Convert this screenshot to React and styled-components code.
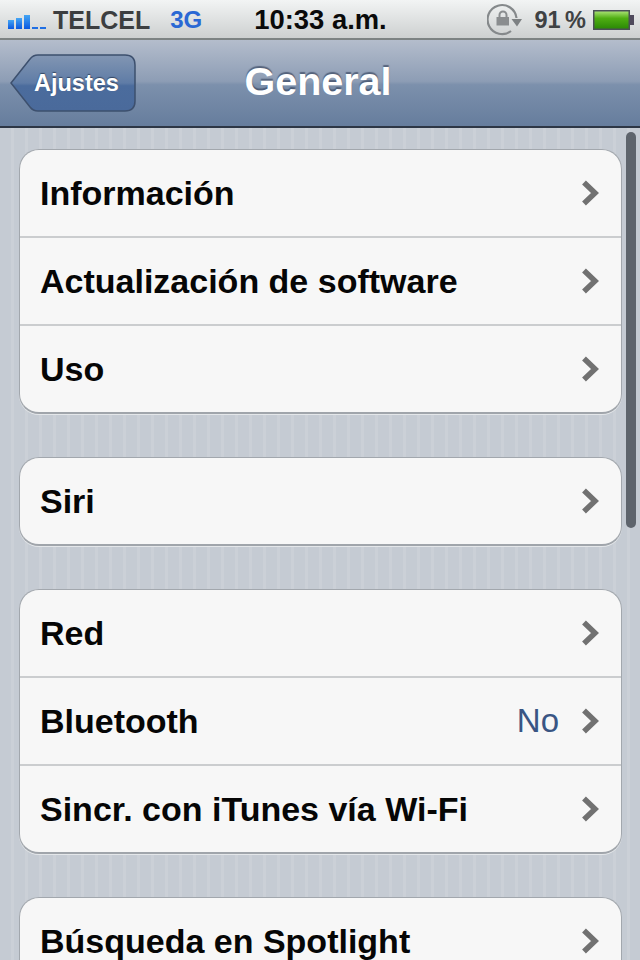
import React from "react";
import styled, {createGlobalStyle} from "styled-components";

const GlobalStyle = createGlobalStyle`
  html, body {margin:0; padding:0; background:#c5cbd3;}
  body {font-family:"Liberation Sans", Arial, sans-serif; width:640px; height:960px; overflow:hidden;}
`;

const Screen = styled.div`position:relative; width:640px; height:960px; overflow:hidden; display:flex; flex-direction:column;`;

const StatusBar = styled.div`
  height:40px; flex:none; display:flex; align-items:center; padding:2px 0 0 8px; box-sizing:border-box;
  background:linear-gradient(#f2f4f4, #cdd0d0); border-bottom:2px solid #7d8383;
  font-size:25px; font-weight:700;
`;
const Carrier = styled.span`color:#3c3e40; margin-left:7px;`;
const Network = styled.span`color:#2a68d4; margin-left:20px; font-size:24px;`;
const Clock = styled.span`color:#0a0a0a; margin-left:52px; font-size:27.4px;`;
const RightStatus = styled.div`margin-left:auto; display:flex; align-items:center; padding-right:6px;`;
const Percent = styled.span`color:#3f4244; margin-left:11px; margin-right:7px; font-size:23.5px; word-spacing:-2px;`;

const NavBar = styled.div`
  height:88px; flex:none; display:flex; align-items:center; position:relative; padding-left:10px; box-sizing:border-box;
  background:linear-gradient(#b4bdcc 0%, #8d9db5 48%, #7c90ac 52%, #667d9d 100%);
  border-bottom:2px solid #2d3645;
`;
const BackButton = styled.div`
  position:relative; width:126px; height:58px; display:flex; align-items:center; padding-left:24px; box-sizing:border-box;
  color:#fff; font-size:23.5px; font-weight:700; text-shadow:0 -1px 1px rgba(30,45,70,.7);
`;
const BackShape = styled.svg`position:absolute; left:0; top:0;`;
const BackLabel = styled.span`position:relative;`;
const Title = styled.div`
  position:absolute; left:0; right:4px; top:18px; text-align:center; color:#fff;
  font-size:39.5px; font-weight:700; line-height:46px; text-shadow:0 -2px 1px rgba(50,65,90,.65);
`;

const Content = styled.div`
  flex:1; padding:21px 18px 0 19px; display:flex; flex-direction:column; gap:43px;
  background:repeating-linear-gradient(90deg, #c5cbd3 0, #c5cbd3 11px, #cbd0d7 11px, #cbd0d7 14px);
`;
const Group = styled.div`
  flex:none; background:#f7f7f7; border-radius:20px; border:1px solid #a2a7ad;
  border-bottom:2px solid #a0a5ab; box-shadow:0 1px 0 #e4e7ea;
`;
const Row = styled.div`
  height:${p => (p.$first ? "86px" : "88px")}; box-sizing:border-box; display:flex; align-items:center; padding:0 22px 0 20px;
  border-top:${p => (p.$first ? "none" : "2px solid #cbcdcf")};
  font-size:34px; font-weight:700; color:#060606;
`;
const RowLabel = styled.span`flex:1;`;
const RowValue = styled.span`font-size:33px; font-weight:400; color:#395583; margin-right:22px;`;
const Chevron = styled.svg`flex:none; display:block;`;

const ScrollThumb = styled.div`
  position:absolute; right:4px; top:132px; width:10px; height:396px; border-radius:5px; background:#5e646c;
`;

const Arrow = () => (
  <Chevron width="18" height="26" viewBox="0 0 18 26">
    <path d="M3 2.5 L14 13 L3 23.5" fill="none" stroke="#717171" strokeWidth="5.5" />
  </Chevron>
);

const Signal = () => (
  <svg width="38" height="20" viewBox="0 0 38 20">
    <defs>
      <linearGradient id="signalFill" x1="0" y1="0" x2="0" y2="1">
        <stop offset="0" stopColor="#45a6f4" />
        <stop offset="1" stopColor="#0a58e0" />
      </linearGradient>
    </defs>
    <rect x="0" y="10" width="6" height="9" fill="url(#signalFill)" />
    <rect x="8" y="8" width="6" height="11" fill="url(#signalFill)" />
    <rect x="16" y="5" width="6" height="14" fill="url(#signalFill)" />
    <rect x="24" y="17" width="6" height="2" fill="#1f6fe4" />
    <rect x="32" y="17" width="6" height="2" fill="#1f6fe4" />
  </svg>
);

const RotationLock = () => (
  <svg width="36" height="34" viewBox="0 0 36 34">
    <path d="M29.5 15 A14.5 14.5 0 1 0 24 28" fill="none" stroke="#85898b" strokeWidth="2.2" />
    <path d="M24.5 16 h10.5 l-5 7.5 z" fill="#7d8183" />
    <rect x="9.5" y="14" width="12.5" height="8.5" fill="#8a8d8f" />
    <path d="M12.5 14.5 v-2.5 a3.5 3.5 0 0 1 7 0 v2.5" fill="none" stroke="#8a8d8f" strokeWidth="2" />
  </svg>
);

const Battery = () => (
  <svg width="41" height="22" viewBox="0 0 41 22">
    <defs>
      <linearGradient id="batteryFill" x1="0" y1="0" x2="0" y2="1">
        <stop offset="0" stopColor="#a6e070" />
        <stop offset=".4" stopColor="#4fae12" />
        <stop offset="1" stopColor="#2c8a06" />
      </linearGradient>
    </defs>
    <rect x="0" y="1" width="37" height="20" fill="#4a4f56" />
    <rect x="1.5" y="2.5" width="34" height="17" fill="url(#batteryFill)" />
    <rect x="37" y="6" width="4" height="10" fill="#4f4a5c" />
  </svg>
);

const sections = [
  [{label: "Información"}, {label: "Actualización de software"}, {label: "Uso"}],
  [{label: "Siri"}],
  [{label: "Red"}, {label: "Bluetooth", value: "No"}, {label: "Sincr. con iTunes vía Wi-Fi"}],
  [{label: "Búsqueda en Spotlight"}],
];

const App = () => (
  <Screen>
    <GlobalStyle />
    <StatusBar>
      <Signal />
      <Carrier>TELCEL</Carrier>
      <Network>3G</Network>
      <Clock>10:33 a.m.</Clock>
      <RightStatus>
        <RotationLock />
        <Percent>91 %</Percent>
        <Battery />
      </RightStatus>
    </StatusBar>
    <NavBar>
      <BackButton>
        <BackShape width="126" height="58" viewBox="0 0 126 58">
          <defs>
            <linearGradient id="backFill" x1="0" y1="0" x2="0" y2="1">
              <stop offset="0" stopColor="#8296b3" />
              <stop offset=".5" stopColor="#5f7ca6" />
              <stop offset=".55" stopColor="#4b6c9d" />
              <stop offset="1" stopColor="#4a6a9b" />
            </linearGradient>
          </defs>
          <path d="M1 29 L20 5 Q23 1 28 1 H115 Q125 1 125 11 V47 Q125 57 115 57 H28 Q23 57 20 53 Z" fill="url(#backFill)" stroke="#3d506e" strokeWidth="1.5" />
        </BackShape>
        <BackLabel>Ajustes</BackLabel>
      </BackButton>
      <Title>General</Title>
    </NavBar>
    <Content>
      {sections.map((rows, i) => (
        <Group key={i}>
          {rows.map((row, j) => (
            <Row key={row.label} $first={j === 0}>
              <RowLabel>{row.label}</RowLabel>
              {row.value && <RowValue>{row.value}</RowValue>}
              <Arrow />
            </Row>
          ))}
        </Group>
      ))}
    </Content>
    <ScrollThumb />
  </Screen>
);

export default App;
